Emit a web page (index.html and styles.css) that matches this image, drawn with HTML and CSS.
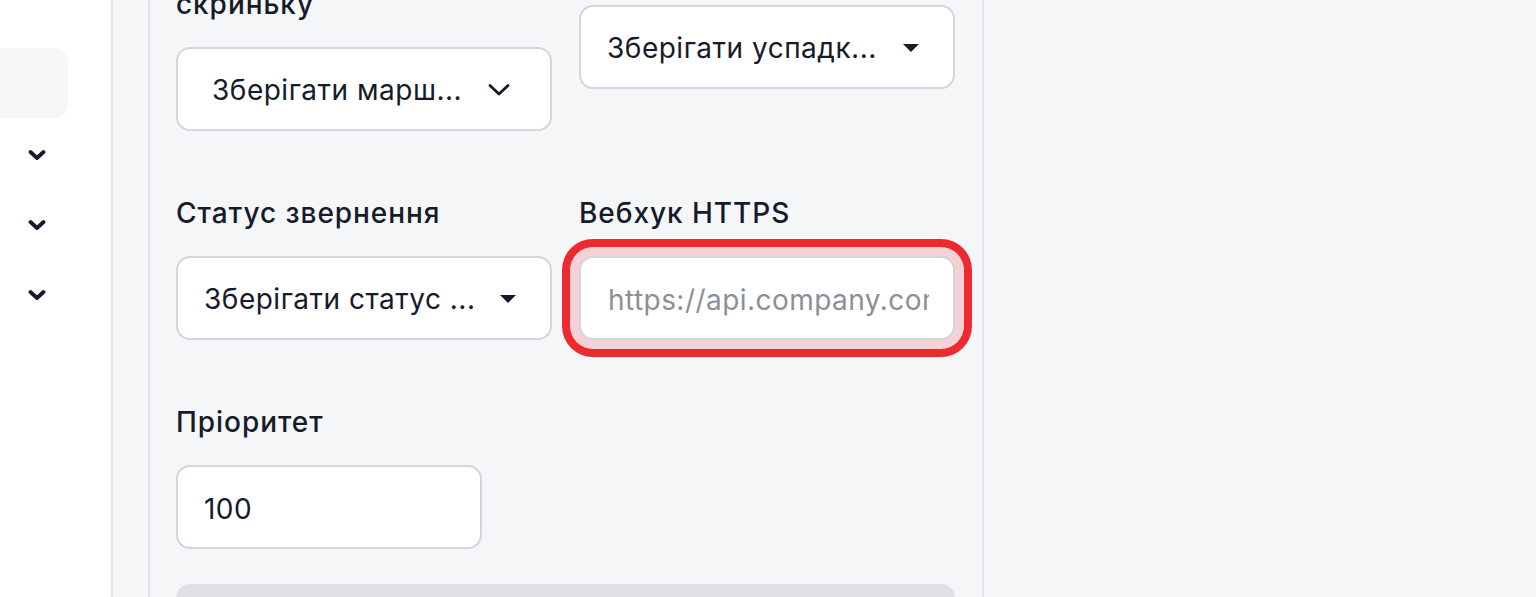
FILE: index.html
```html
<!DOCTYPE html>
<html lang="uk">
<head>
<meta charset="utf-8">
<title>Налаштування правила</title>
<link rel="stylesheet" href="styles.css">
</head>
<body>
<div class="app">
  <aside class="sidebar">
    <div class="side-active"></div>
    <div class="side-item">
      <svg class="side-chev" viewBox="0 0 18 12" width="18" height="12"><path d="M2.5 3 L9 9 L15.5 3" fill="none" stroke="currentColor" stroke-width="3.8" stroke-linecap="round" stroke-linejoin="round"/></svg>
    </div>
    <div class="side-item">
      <svg class="side-chev" viewBox="0 0 18 12" width="18" height="12"><path d="M2.5 3 L9 9 L15.5 3" fill="none" stroke="currentColor" stroke-width="3.8" stroke-linecap="round" stroke-linejoin="round"/></svg>
    </div>
    <div class="side-item">
      <svg class="side-chev" viewBox="0 0 18 12" width="18" height="12"><path d="M2.5 3 L9 9 L15.5 3" fill="none" stroke="currentColor" stroke-width="3.8" stroke-linecap="round" stroke-linejoin="round"/></svg>
    </div>
  </aside>
  <main class="main">
    <section class="panel">
      <div class="form">
        <div class="field">
          <label class="label">Переслати в<br>скриньку</label>
          <div class="select select-chevron">
            <span class="select-text">Зберігати марш...</span>
            <svg class="chev" viewBox="0 0 22 12" width="22" height="12"><path d="M2 1.5 L11 10 L20 1.5" fill="none" stroke="currentColor" stroke-width="2.8" stroke-linecap="round" stroke-linejoin="round"/></svg>
          </div>
        </div>
        <div class="field">
          <label class="label">Успадкування</label>
          <div class="select">
            <span class="select-text">Зберігати успадк...</span>
            <svg class="caret" viewBox="0 0 16 8" width="16" height="8"><path d="M0 0 H16 L8 8 Z" fill="currentColor"/></svg>
          </div>
        </div>
        <div class="field">
          <label class="label">Статус звернення</label>
          <div class="select">
            <span class="select-text">Зберігати статус ...</span>
            <svg class="caret" viewBox="0 0 16 8" width="16" height="8"><path d="M0 0 H16 L8 8 Z" fill="currentColor"/></svg>
          </div>
        </div>
        <div class="field">
          <label class="label" for="webhook">Вебхук HTTPS</label>
          <input id="webhook" class="input input-error" type="text" placeholder="https://api.company.com/webhooks/support">
        </div>
        <div class="field">
          <label class="label" for="prio">Пріоритет</label>
          <input id="prio" class="input input-short" type="text" value="100">
        </div>
      </div>
      <div class="footer-bar"></div>
    </section>
  </main>
</div>
</body>
</html>
```

FILE: styles.css
```css
* { box-sizing: border-box; }

html, body {
  margin: 0;
  padding: 0;
}

body {
  background: #f6f7f9;
  font-family: Inter, "Noto Sans", "Liberation Sans", sans-serif;
  color: #161b2b;
}

.app {
  display: flex;
  height: 597px;
  overflow: hidden;
}

.sidebar {
  width: 113px;
  flex: 0 0 113px;
  background: #ffffff;
  border-right: 2px solid #e4e6e9;
  padding-top: 48px;
}

.side-active {
  width: 82px;
  height: 70px;
  margin-left: -14px;
  margin-bottom: 2px;
  background: #f5f6f8;
  border-radius: 14px;
}

.side-item {
  height: 70px;
  display: flex;
  align-items: center;
  padding-left: 28px;
  color: #141a2a;
}

.side-chev { display: block; }

.main {
  flex: 1;
  padding-left: 35px;
  overflow: hidden;
}

.panel {
  width: 836px;
  height: 720px;
  margin-top: -59px;
  background: #f5f6f8;
  border-left: 2px solid #e3e5e8;
  border-right: 2px solid #e3e5e8;
  padding: 0 26px;
}

.form {
  display: grid;
  grid-template-columns: 376px 376px;
  column-gap: 27px;
  row-gap: 61px;
  align-items: start;
}

.field {
  display: flex;
  flex-direction: column;
  align-items: flex-start;
}

.label {
  display: block;
  font-size: 28px;
  line-height: 42px;
  font-weight: 500;
  letter-spacing: 0.95px;
  margin-bottom: 22px;
  color: #161b2b;
}

.select {
  width: 376px;
  height: 84px;
  background: #ffffff;
  border: 2px solid #d3d6db;
  border-radius: 14px;
  display: flex;
  align-items: center;
  padding: 2px 34px 0 26px;
  font-size: 28px;
  letter-spacing: 0.5px;
  color: #161b2b;
}

.select-chevron {
  padding-left: 34px;
  padding-right: 40px;
}

.select-text {
  white-space: nowrap;
  overflow: hidden;
  text-overflow: ellipsis;
  min-width: 0;
}

.caret,
.chev {
  flex: 0 0 auto;
  margin-left: auto;
  color: #161b2b;
  display: block;
}

.input {
  width: 376px;
  height: 84px;
  background: #ffffff;
  border: 2px solid #d3d6db;
  border-radius: 14px;
  padding: 4px 24px 0 27px;
  font-family: Inter, "Noto Sans", "Liberation Sans", sans-serif;
  font-size: 28px;
  letter-spacing: 0.45px;
  color: #161b2b;
  outline: none;
}

.input::placeholder { color: #8a8f99; }

.input-error {
  box-shadow: 0 0 0 9px #f4d1d5, 0 0 0 17px #ee2a31;
}

.input-short {
  width: 306px;
  padding-left: 26px;
}

.footer-bar {
  margin-top: 35px;
  width: 779px;
  height: 84px;
  background: #e0e0e4;
  border-radius: 14px;
}
```
